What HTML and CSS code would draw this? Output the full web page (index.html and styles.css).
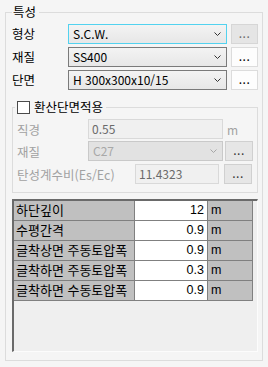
FILE: index.html
```html
<!DOCTYPE html>
<html lang="ko">
<head>
<meta charset="utf-8">
<title>특성</title>
<link rel="stylesheet" href="styles.css">
</head>
<body>
<fieldset class="grp outer">
  <legend class="grp-title">특성</legend>
  <div class="row">
    <span class="lbl">형상</span>
    <div class="combo focus"><span class="ctext">S.C.W.</span><svg class="arrow" width="7" height="4" viewBox="0 0 7 4"><polyline points="0.5,0.5 3.5,3.5 6.5,0.5" fill="none" stroke="#333" stroke-width="1"/></svg></div>
    <button class="btn dim">...</button>
  </div>
  <div class="row">
    <span class="lbl">재질</span>
    <div class="combo"><span class="ctext">SS400</span><svg class="arrow" width="7" height="4" viewBox="0 0 7 4"><polyline points="0.5,0.5 3.5,3.5 6.5,0.5" fill="none" stroke="#333" stroke-width="1"/></svg></div>
    <button class="btn">...</button>
  </div>
  <div class="row last">
    <span class="lbl">단면</span>
    <div class="combo"><span class="ctext">H 300x300x10/15</span><svg class="arrow" width="7" height="4" viewBox="0 0 7 4"><polyline points="0.5,0.5 3.5,3.5 6.5,0.5" fill="none" stroke="#333" stroke-width="1"/></svg></div>
    <button class="btn">...</button>
  </div>

  <fieldset class="grp inner">
    <legend class="chk-legend"><span class="chk"></span><span>환산단면적용</span></legend>
    <div class="irow">
      <span class="ilbl">직경</span>
      <div class="tbox">0.55</div>
      <span class="unit">m</span>
    </div>
    <div class="irow r2">
      <span class="ilbl">재질</span>
      <div class="combo dis"><span class="ctext">C27</span><svg class="arrow" width="7" height="4" viewBox="0 0 7 4"><polyline points="0.5,0.5 3.5,3.5 6.5,0.5" fill="none" stroke="#a6a6a6" stroke-width="1"/></svg></div>
      <button class="btn small b2">...</button>
    </div>
    <div class="irow">
      <span class="ilbl wide">탄성계수비(Es/Ec)</span>
      <div class="tbox short">11.4323</div>
      <button class="btn small b3">...</button>
    </div>
  </fieldset>

  <div class="grid">
    <table class="gtable">
      <tr><td class="gl">하단깊이</td><td class="gv">12</td><td class="gu">m</td></tr>
      <tr><td class="gl">수평간격</td><td class="gv">0.9</td><td class="gu">m</td></tr>
      <tr><td class="gl">글착상면 주동토압폭</td><td class="gv">0.9</td><td class="gu">m</td></tr>
      <tr><td class="gl">글착하면 주동토압폭</td><td class="gv">0.3</td><td class="gu">m</td></tr>
      <tr><td class="gl">글착하면 수동토압폭</td><td class="gv">0.9</td><td class="gu">m</td></tr>
    </table>
  </div>
</fieldset>
</body>
</html>
```

FILE: styles.css
```css
html, body {
  margin: 0;
  background: #f5f5f5;
}
body {
  padding: 5px 0 0 5px;
  font-family: "Noto Sans CJK KR", "Liberation Sans", sans-serif;
  font-size: 12px;
  color: #000;
  width: 268px;
  height: 367px;
  box-sizing: border-box;
  overflow: hidden;
}
.grp {
  margin: 0;
  min-width: 0;
  border: 1px solid #dcdcdc;
  box-sizing: border-box;
}
.outer {
  width: 258px;
  height: 356px;
  padding: 5px 4px 0 6px;
}
.grp-title {
  padding: 0 3px 0 1px;
  line-height: 14px;
  font-size: 12.5px;
}
.row {
  display: flex;
  align-items: center;
  height: 20px;
  margin-bottom: 3px;
}
.row.last { margin-bottom: 0; }
.lbl {
  width: 56px;
  flex: none;
  line-height: 20px;
  font-size: 12.5px;
}
.combo {
  width: 159px;
  height: 20px;
  flex: none;
  box-sizing: border-box;
  border: 1px solid #7a7a7a;
  background: linear-gradient(#f3f3f3, #e7e7e7);
  display: flex;
  align-items: center;
  justify-content: space-between;
  padding: 0 5px 0 4px;
}
.combo.focus { border-color: #52d2ef; }
.ctext { line-height: 18px; white-space: nowrap; }
.arrow { display: block; flex: none; }
.btn {
  width: 27px;
  height: 20px;
  flex: none;
  margin: 0 0 0 4px;
  padding: 0 0 2px 0;
  box-sizing: border-box;
  border: 1px solid #dcdcdc;
  background: #fdfdfd;
  font-family: "Noto Sans CJK KR", sans-serif;
  font-size: 12px;
  line-height: 16px;
  color: #000;
  letter-spacing: 0.5px;
  text-align: center;
}
.btn.dim {
  background: #e5e5e5;
  border-color: #d6d6d6;
  color: #6a6a6a;
}
.inner {
  margin-top: 10px;
  width: 246px;
  height: 93px;
  padding: 5px 4px 0 4px;
}
.chk-legend {
  display: flex;
  align-items: center;
  gap: 4px;
  padding: 0 3px 0 2px;
  margin-left: -2px;
  line-height: 14px;
  font-size: 12.5px;
}
.chk {
  width: 13px;
  height: 13px;
  box-sizing: border-box;
  border: 1px solid #4a4a4a;
  background: #fff;
}
.irow {
  display: flex;
  align-items: center;
  height: 20px;
  margin-bottom: 2px;
}
.irow.r2 { margin-bottom: 3px; }
.ilbl {
  width: 71px;
  flex: none;
  color: #a2a2a2;
  white-space: nowrap;
  font-size: 12.5px;
}
.ilbl.wide { width: 118px; }
.tbox {
  width: 135px;
  height: 20px;
  flex: none;
  box-sizing: border-box;
  border: 1px solid #d9d9d9;
  background: #f0f0f0;
  color: #6a6a6a;
  padding-left: 3px;
  line-height: 18px;
}
.tbox.short { width: 84px; }
.unit {
  margin-left: 4px;
  color: #a2a2a2;
}
.combo.dis {
  width: 135px;
  background: #e2e2e2;
  border-color: #c9c9c9;
  color: #a8a8a8;
}
.btn.small {
  width: 28px;
  background: #e6e6e6;
  border-color: #d0d0d0;
  color: #333;
}
.btn.b2 { margin-left: 2px; }
.btn.b3 { margin-left: 5px; }
.grid {
  margin-top: 6px;
  width: 246px;
  height: 153px;
  box-sizing: border-box;
  border-top: 2px solid #6a6a6a;
  border-left: 2px solid #6a6a6a;
  border-right: 1px solid #fcfcfc;
  border-bottom: 1px solid #fcfcfc;
  background: #efefef;
}
.gtable {
  border-collapse: separate;
  border-spacing: 0;
  font-family: "Liberation Sans", "Noto Sans CJK KR", sans-serif;
  font-size: 12.5px;
  table-layout: fixed;
}
.gtable td {
  height: 19px;
  padding: 0;
  border-right: 1px solid #808080;
  border-bottom: 1px solid #808080;
  white-space: nowrap;
  line-height: 19px;
  overflow: hidden;
}
.gl {
  width: 118px;
  padding-left: 2px !important;
  background: #c0c0c0;
  font-size: 13px;
}
.gv {
  width: 69px;
  padding-right: 3px !important;
  text-align: right;
  background: #fff;
}
.gu {
  width: 41px;
  padding-left: 3px !important;
  background: #c0c0c0;
}
```
